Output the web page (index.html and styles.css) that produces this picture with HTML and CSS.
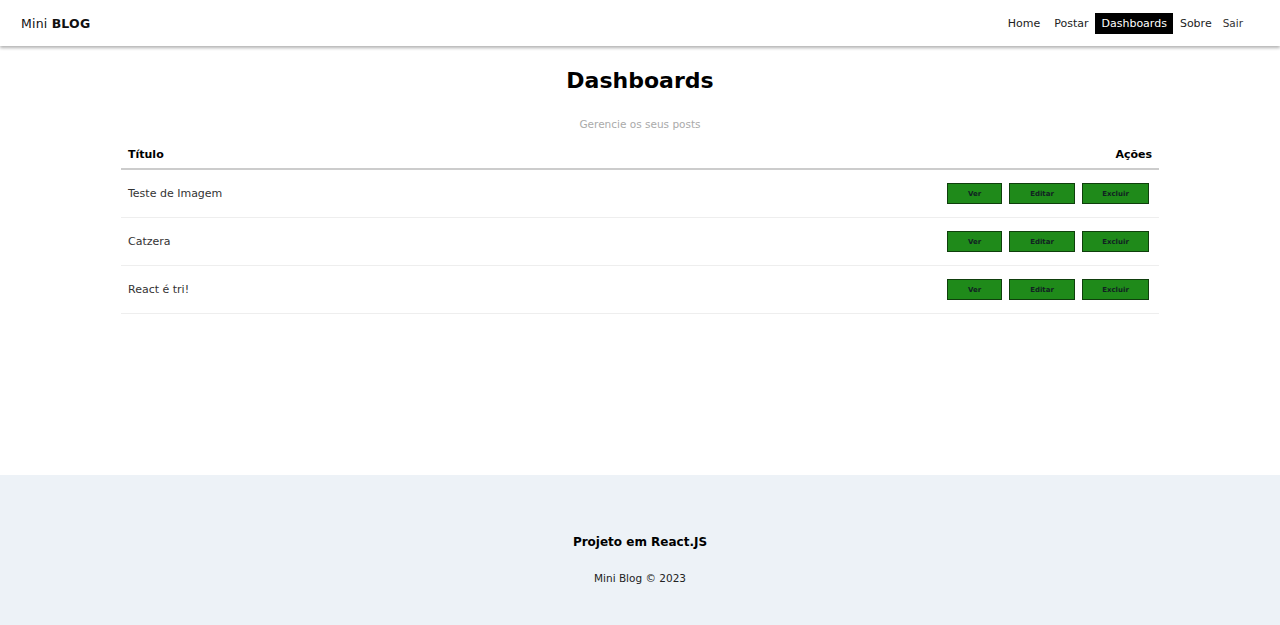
FILE: index.html
```html
<!DOCTYPE html>
<html lang="pt-BR">
<head>
<meta charset="utf-8">
<title>Mini Blog</title>
<link rel="stylesheet" href="styles.css">
</head>
<body>
<header class="navbar">
  <a class="brand">Mini <span class="brand-bold">BLOG</span></a>
  <nav class="links">
    <a class="link">Home</a>
    <a class="link">Postar</a>
    <a class="link active">Dashboards</a>
    <a class="link">Sobre</a>
    <button class="logout">Sair</button>
  </nav>
</header>
<main class="main">
  <div class="dashboard">
    <h1 class="title">Dashboards</h1>
    <p class="subtitle">Gerencie os seus posts</p>
    <div class="post-header">
      <span>Título</span>
      <span>Ações</span>
    </div>
    <div class="post-row">
      <p class="post-title">Teste de Imagem</p>
      <div class="actions">
        <button class="btn btn-ver">Ver</button>
        <button class="btn btn-edit">Editar</button>
        <button class="btn btn-del">Excluir</button>
      </div>
    </div>
    <div class="post-row">
      <p class="post-title">Catzera</p>
      <div class="actions">
        <button class="btn btn-ver">Ver</button>
        <button class="btn btn-edit">Editar</button>
        <button class="btn btn-del">Excluir</button>
      </div>
    </div>
    <div class="post-row">
      <p class="post-title">React é tri!</p>
      <div class="actions">
        <button class="btn btn-ver">Ver</button>
        <button class="btn btn-edit">Editar</button>
        <button class="btn btn-del">Excluir</button>
      </div>
    </div>
  </div>
</main>
<footer class="footer">
  <h3 class="footer-title">Projeto em React.JS</h3>
  <p class="footer-copy">Mini Blog &copy; 2023</p>
</footer>
</body>
</html>
```
FILE: styles.css
```css
* { box-sizing: border-box; }
html, body { margin: 0; padding: 0; }
body {
  font-family: "DejaVu Sans", "Noto Sans", sans-serif;
  color: #000;
  background: #fff;
}
.navbar {
  height: 46px;
  display: flex;
  align-items: center;
  justify-content: space-between;
  padding: 0 37px 0 21px;
  box-shadow: 0 2px 3px rgba(0,0,0,0.3);
  position: relative;
  z-index: 1;
}
.brand {
  font-size: 12.5px;
  color: #111;
  letter-spacing: 0.2px;
}
.brand-bold { font-weight: 900; }
.links { display: flex; align-items: center; gap: 0; }
.link {
  font-size: 11px;
  color: #222;
  padding: 5px 7px;
  line-height: 11px;
}
.link.active {
  background: #000;
  color: #fff;
  padding: 5px 6px;
}
.logout {
  font-family: inherit;
  font-size: 10.5px;
  color: #333;
  background: none;
  border: none;
  padding: 5px 0 5px 4px;
  cursor: pointer;
}
.main {
  height: 429px;
}
.dashboard {
  width: 1038px;
  margin: 0 auto;
  display: flex;
  flex-direction: column;
}
.title {
  text-align: center;
  font-size: 22px;
  font-weight: 700;
  margin: 21px 0 0;
  line-height: 28px;
}
.subtitle {
  text-align: center;
  color: #aaa;
  font-size: 10.5px;
  margin: 22px 0 0;
  line-height: 14px;
}
.post-header {
  display: flex;
  justify-content: space-between;
  font-weight: 700;
  font-size: 11px;
  padding: 17px 7px 7px;
  border-bottom: 2px solid #ccc;
}
.post-row {
  display: flex;
  align-items: center;
  justify-content: space-between;
  height: 48px;
  border-bottom: 1px solid #eee;
  padding: 0 10px 0 7px;
}
.post-title {
  margin: 0;
  font-size: 11px;
  color: #333;
}
.actions { display: flex; gap: 7px; }
.btn {
  font-family: "DejaVu Sans", sans-serif;
  font-size: 7px;
  font-weight: 700;
  color: #122;
  background: #1f8a1a;
  border: 1px solid #0f3f0c;
  height: 21px;
  cursor: pointer;
  padding: 0;
}
.btn-ver { width: 55px; }
.btn-edit { width: 66px; }
.btn-del { width: 67px; }
.footer {
  height: 150px;
  background: #edf2f7;
  display: flex;
  flex-direction: column;
  align-items: center;
}
.footer-title {
  margin: 59px 0 0;
  font-size: 12px;
  font-weight: 700;
  line-height: 16px;
}
.footer-copy {
  margin: 21px 0 0;
  font-size: 10.5px;
  color: #222;
  line-height: 14px;
}
```
